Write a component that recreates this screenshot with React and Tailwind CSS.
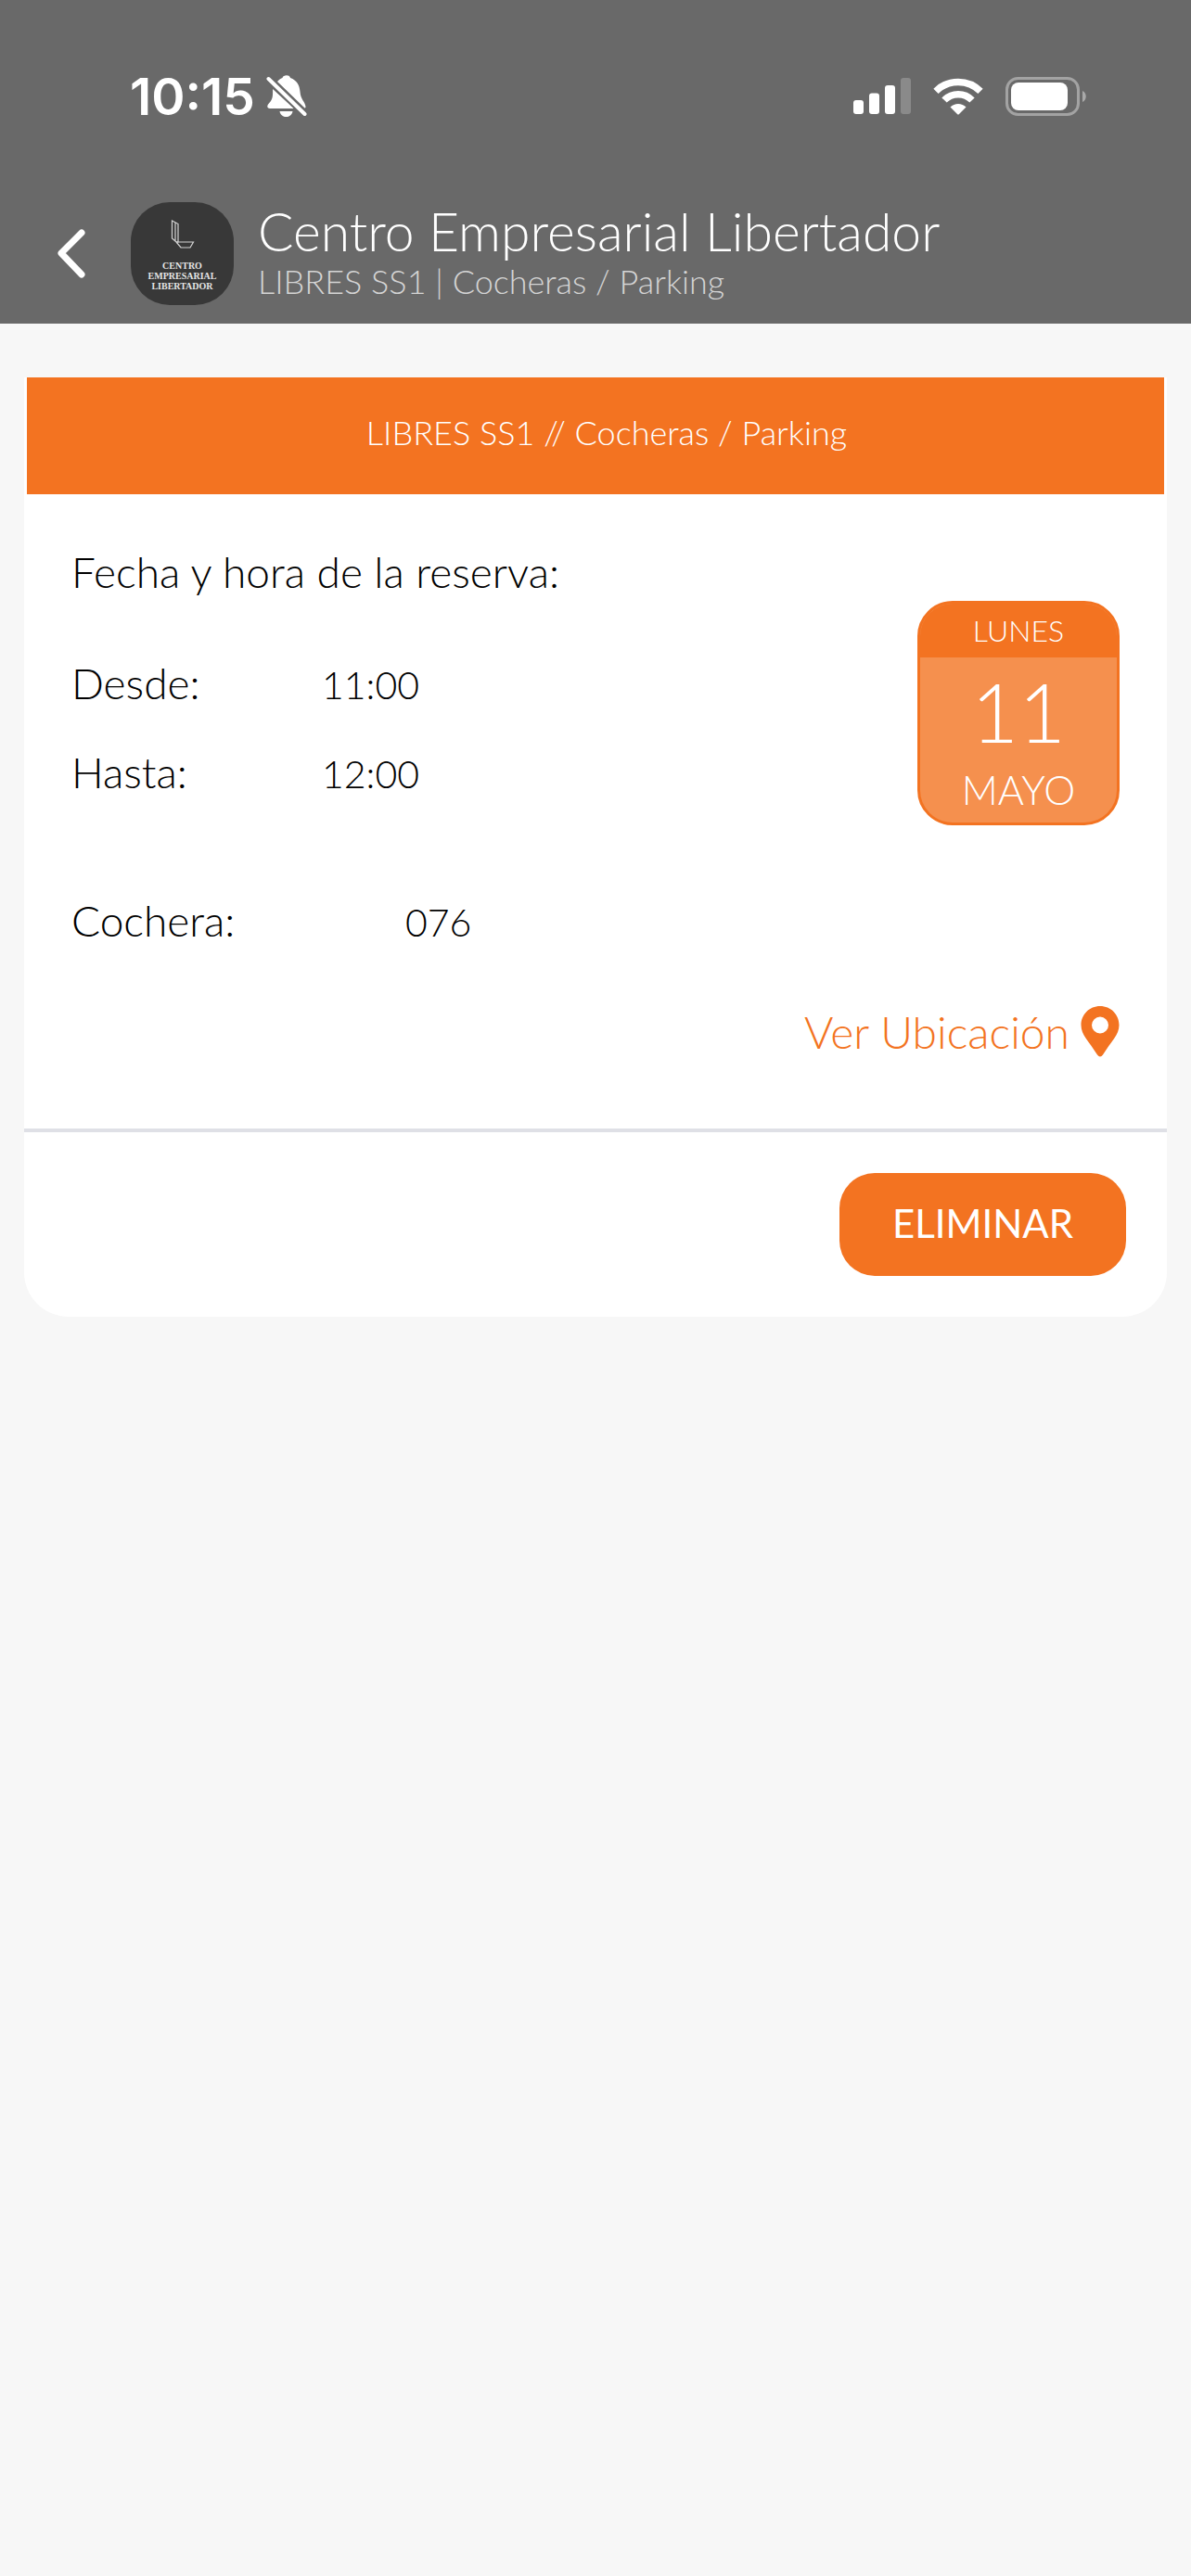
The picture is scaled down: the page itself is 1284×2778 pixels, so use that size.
import React from 'react';

const ROWS = [
  { label: 'Desde:', value: '11:00' },
  { label: 'Hasta:', value: '12:00' },
];

function BellOffIcon() {
  return (
    <svg viewBox="0 0 44 48" className="w-11 h-12" aria-hidden="true">
      <g fill="#fff">
        <path d="M7 16 L30 37 H4 C1 37 0.500 34 2.500 32 C6 28 7.500 26 7 16Z" />
        <path d="M12 8 C14 5.500 16 4.500 17.500 4 C18 1 25 0 26 4 C33 6.500 36 12 36.500 19 C37 27 42 30 42.500 35 C42.500 36 42 36.500 41.500 36.500Z" />
        <path d="M14.500 40 H28.500 C27 48 16 48 14.500 40Z" />
      </g>
      <path d="M2.500 5 L41.500 43" stroke="#696969" strokeWidth="8" />
      <path d="M2.500 5 L41.500 43" stroke="#fff" strokeWidth="4" strokeLinecap="round" />
    </svg>
  );
}

function SignalIcon() {
  return (
    <svg viewBox="0 0 62 40" className="w-[62px] h-10" fill="#fff" aria-hidden="true">
      <rect x="0" y="24" width="11" height="15" rx="3" />
      <rect x="17" y="16.500" width="11" height="22.500" rx="3" />
      <rect x="34" y="8" width="11" height="31" rx="3" />
      <rect x="51" y="0" width="11" height="39" rx="3" opacity="0.220" />
    </svg>
  );
}

function WifiIcon() {
  return (
    <svg viewBox="0 0 54 40" className="w-[54px] h-10" aria-hidden="true">
      <g fill="none" stroke="#fff" strokeWidth="7.500">
        <path d="M3 14.300 A34 34 0 0 1 51 14.300" />
        <path d="M12 24 A21 21 0 0 1 42 24" />
      </g>
      <path d="M18.500 31.500 A12 12 0 0 1 35.500 31.500 L28 39 Q27 40 26 39Z" fill="#fff" />
    </svg>
  );
}

function BatteryIcon() {
  return (
    <svg viewBox="0 0 88 42" className="w-[88px] h-[42px]" aria-hidden="true">
      <rect x="1.500" y="1.500" width="77" height="39" rx="12" fill="none" stroke="#a3a3a3" strokeWidth="3" />
      <rect x="6" y="6" width="61" height="30" rx="8" fill="#fff" />
      <path d="M83 15 C88 17 88 25 83 27Z" fill="#a9a9a9" />
    </svg>
  );
}

function StatusBar() {
  return (
    <div className="flex items-center justify-between pt-19 pl-[140px] pr-[112px]">
      <div className="flex items-center gap-3">
        <span className="font-['Inter',sans-serif] font-semibold text-[55px] leading-[56px] text-white">10:15</span>
        <BellOffIcon />
      </div>
      <div className="flex items-center gap-6">
        <SignalIcon />
        <WifiIcon />
        <BatteryIcon />
      </div>
    </div>
  );
}

function Avatar() {
  return (
    <div className="w-[111px] h-[111px] rounded-[42px] bg-[#383838] flex flex-col items-center pt-[19px] shrink-0">
      <svg viewBox="0 0 26 32" className="w-[26px] h-8 mb-3" fill="none" stroke="#d4d4d4" strokeWidth="1.200" aria-hidden="true">
        <path d="M1.500 1 L8 4.500 V24 L6 24 L1.500 20Z M5 3 V23" />
        <path d="M6 24 H24.500 L21 30 H11 L6 24" />
      </svg>
      <div className="font-['Liberation_Serif',serif] font-bold text-[10px] leading-[11px] text-[#e5e5e5] text-center">
        <p>CENTRO</p>
        <p>EMPRESARIAL</p>
        <p>LIBERTADOR</p>
      </div>
    </div>
  );
}

function Header() {
  return (
    <header className="bg-[#696969] pb-5">
      <StatusBar />
      <div className="flex items-center pt-[86px] pl-[60px]">
        <button aria-label="Volver" className="mr-12">
          <svg viewBox="0 0 33 60" className="w-[33px] h-[60px]" fill="none" stroke="#fff" strokeWidth="7" strokeLinecap="round" strokeLinejoin="round" aria-hidden="true">
            <path d="M28 7 L6 29 L28 52" />
          </svg>
        </button>
        <Avatar />
        <div className="ml-[26px]">
          <h1 className="font-light text-[57px] leading-[58px] text-white">Centro Empresarial Libertador</h1>
          <p className="font-light text-[36px] leading-[50px] text-[#d4d4d4]">LIBRES SS1 | Cocheras / Parking</p>
        </div>
      </div>
    </header>
  );
}

function DateBadge() {
  return (
    <div className="w-[218px] rounded-[38px] border-3 border-[#f37321] bg-[#f5904e] overflow-hidden text-center text-white font-light">
      <p className="bg-[#f37321] text-[32px] leading-[58px]">LUNES</p>
      <p className="text-[88px] leading-[116px]">11</p>
      <p className="text-[43px] leading-[54px] pb-2">MAYO</p>
    </div>
  );
}

export default function App() {
  return (
    <div className="min-h-screen bg-[#f7f7f7] font-['Lato',sans-serif]">
      <Header />
      <main className="mx-[26px] mt-[58px] bg-white rounded-b-[48px] text-[46px] leading-[56px] font-light text-black">
        <h2 className="mx-[3px] bg-[#f37321] pt-8 pb-10 pl-6 text-center text-[36px] leading-[54px] text-white">
          LIBRES SS1 // Cocheras / Parking
        </h2>

        <section className="flex justify-between items-start pt-14 px-[51px]">
          <div>
            <p>Fecha y hora de la reserva:</p>
            <dl className="mt-16 flex flex-col gap-[38px]">
              {ROWS.map((row) => (
                <div key={row.label} className="flex items-baseline">
                  <dt className="w-[270px]">{row.label}</dt>
                  <dd className="text-[41px]">{row.value}</dd>
                </div>
              ))}
              <div className="flex items-baseline mt-16">
                <dt className="w-[360px]">Cochera:</dt>
                <dd className="text-[41px]">076</dd>
              </div>
            </dl>
          </div>
          <div className="pt-[59px]">
            <DateBadge />
          </div>
        </section>

        <div className="flex justify-end pt-[62px] pb-[76px] pr-[51px]">
          <a href="#ubicacion" className="flex items-center gap-3 text-[48px] text-[#f37321]">
            Ver Ubicación
            <svg viewBox="0 0 42 56" className="w-[42px] h-14" fill="#f37321" aria-hidden="true">
              <path fillRule="evenodd" d="M21 0 C9.500 0 0.500 9 0.500 20.500 C0.500 31 9 38 18 52.500 Q21 56.500 24 52.500 C33 38 41.500 31 41.500 20.500 C41.500 9 32.500 0 21 0Z M21 11.500 A9 9 0 1 1 21 29.500 A9 9 0 1 1 21 11.500Z" />
            </svg>
          </a>
        </div>

        <footer className="flex justify-end border-t-4 border-[#dfe0e6] pt-11 pb-11 pr-11">
          <button className="rounded-[38px] bg-[#f37321] w-[309px] h-[111px] pb-1 text-[42px] font-normal text-white">ELIMINAR</button>
        </footer>
      </main>
    </div>
  );
}
